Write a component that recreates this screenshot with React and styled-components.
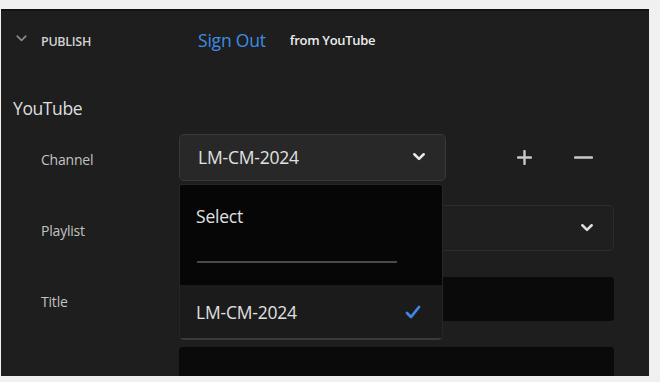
import React from 'react';
import styled, { createGlobalStyle } from 'styled-components';

const Global = createGlobalStyle`
  html, body {
    margin: 0;
    padding: 0;
    background: #f0f0f0;
  }
  body {
    font-family: "Open Sans", "Noto Sans", sans-serif;
    overflow: hidden;
  }
`;

const Panel = styled.div`
  margin: 9px 0 0 1px;
  width: 648px;
  height: 367px;
  box-sizing: border-box;
  background: #1e1e1e;
  border-top: 2px solid #121212;
  padding: 0 0 0 12px;
  overflow: hidden;
`;

const Header = styled.div`
  display: flex;
  align-items: center;
  height: 58px;
`;

const Caret = styled.div`
  width: 28px;
  display: flex;
  align-items: center;
  padding-left: 3px;
  box-sizing: border-box;
  color: #8a8a8a;
  margin-top: -3px;
`;

const SectionLabel = styled.div`
  width: 157px;
  font-size: 12.5px;
  font-weight: 600;
  color: #d2d2d2;
  letter-spacing: -0.3px;
  margin-top: 3px;
`;

const SignOut = styled.a`
  color: #3c8ce6;
  font-size: 17.5px;
  font-weight: 500;
  text-decoration: none;
  letter-spacing: -0.2px;
`;

const FromText = styled.span`
  margin-left: 24px;
  color: #ededed;
  font-size: 13px;
  font-weight: 600;
  letter-spacing: -0.3px;
`;

const Title = styled.div`
  margin-top: 28px;
  height: 22px;
  line-height: 22px;
  font-size: 17.5px;
  font-weight: 500;
  color: #dedede;
  letter-spacing: -0.4px;
`;

const Form = styled.div`
  margin-top: 15px;
  display: grid;
  grid-template-columns: 166px 435px;
  grid-auto-rows: 46px;
  row-gap: 25px;
`;

const Label = styled.div`
  padding: 4px 0 0 28px;
  display: flex;
  align-items: center;
  font-size: 14px;
  font-weight: 500;
  color: #c2c2c2;
  letter-spacing: -0.2px;
`;

const Control = styled.div`
  position: relative;
  display: flex;
  align-items: center;
`;

const Select = styled.div`
  box-sizing: border-box;
  width: ${(p) => p.$width || '100%'};
  height: ${(p) => p.$height || '46px'};
  display: flex;
  align-items: center;
  justify-content: space-between;
  padding: 0 20px 0 18px;
  border-radius: 5px;
  background: ${(p) => (p.$raised ? '#282828' : '#1f1f1f')};
  border: 1px solid ${(p) => (p.$raised ? '#393939' : '#2c2c2c')};
  color: #e2e2e2;
  font-size: 17.5px;
  font-weight: 500;
  letter-spacing: -0.2px;
`;

const Field = styled.div`
  box-sizing: border-box;
  width: 100%;
  height: ${(p) => p.$height || '44px'};
  align-self: ${(p) => (p.$top ? 'flex-start' : 'center')};
  border-radius: 4px;
  background: #0a0a0a;
`;

const IconButton = styled.span`
  display: flex;
  color: #c8c8c8;
  margin-left: ${(p) => p.$gap}px;
`;

const Menu = styled.div`
  position: absolute;
  top: 50px;
  left: 0;
  z-index: 2;
  width: 264px;
  height: 156px;
  box-sizing: border-box;
  background: #060606;
  border: 1px solid #262626;
  border-bottom: 2px solid #3a3a3a;
  border-radius: 3px 3px 5px 5px;
  display: flex;
  flex-direction: column;
`;

const Option = styled.div`
  display: flex;
  align-items: center;
  justify-content: space-between;
  height: ${(p) => p.$height}px;
  padding: 0 21px 0 16px;
  background: ${(p) => (p.$selected ? '#1b1b1b' : 'transparent')};
  color: #e0e0e0;
  font-size: 17.5px;
  font-weight: 500;
  letter-spacing: -0.2px;
`;

const Divider = styled.div`
  margin: 15px 0 22px 17px;
  width: 200px;
  height: 2px;
  background: #4a4a4a;
`;

const Chevron = ({ size = 12, color = '#e8e8e8', width = 2.6 }) => (
  <svg width={size} height={size * 0.62} viewBox="0 0 12 7.5">
    <polyline
      points="1.3,1.3 6,5.9 10.7,1.3"
      fill="none"
      stroke={color}
      strokeWidth={width}
      strokeLinecap="round"
      strokeLinejoin="round"
    />
  </svg>
);

const Plus = () => (
  <svg width="15" height="15" viewBox="0 0 15 15">
    <path d="M7.5 1v13M1 7.5h13" stroke="currentColor" strokeWidth="2.4" strokeLinecap="round" />
  </svg>
);

const Minus = () => (
  <svg width="19" height="15" viewBox="0 0 19 15">
    <path d="M1 7.5h17" stroke="currentColor" strokeWidth="2.4" strokeLinecap="round" />
  </svg>
);

const Check = () => (
  <svg width="16" height="14" viewBox="0 0 16 14">
    <polyline
      points="2,8 6,12 14,2"
      fill="none"
      stroke="#3f86e4"
      strokeWidth="2.8"
      strokeLinecap="round"
      strokeLinejoin="round"
    />
  </svg>
);

const App = () => {
  return (
    <>
      <Global />
      <Panel>
        <Header>
          <Caret>
            <Chevron size={11} color="#8c8c8c" width={1.8} />
          </Caret>
          <SectionLabel>PUBLISH</SectionLabel>
          <SignOut href="#">Sign Out</SignOut>
          <FromText>from YouTube</FromText>
        </Header>

        <Title>YouTube</Title>

        <Form>
          <Label>Channel</Label>
          <Control>
            <Select $raised $width="267px" $height="47px">
              <span>LM-CM-2024</span>
              <Chevron />
            </Select>
            <IconButton $gap={71}>
              <Plus />
            </IconButton>
            <IconButton $gap={42}>
              <Minus />
            </IconButton>
            <Menu>
              <Option $height={62}>Select</Option>
              <Divider />
              <Option $height={53} $selected>
                <span>LM-CM-2024</span>
                <Check />
              </Option>
            </Menu>
          </Control>

          <Label>Playlist</Label>
          <Control>
            <Select>
              <span />
              <Chevron size={12} color="#dcdcdc" />
            </Select>
          </Control>

          <Label>Title</Label>
          <Control>
            <Field />
          </Control>

          <Label />
          <Control>
            <Field $top $height="60px" />
          </Control>
        </Form>
      </Panel>
    </>
  );
};

export default App;
